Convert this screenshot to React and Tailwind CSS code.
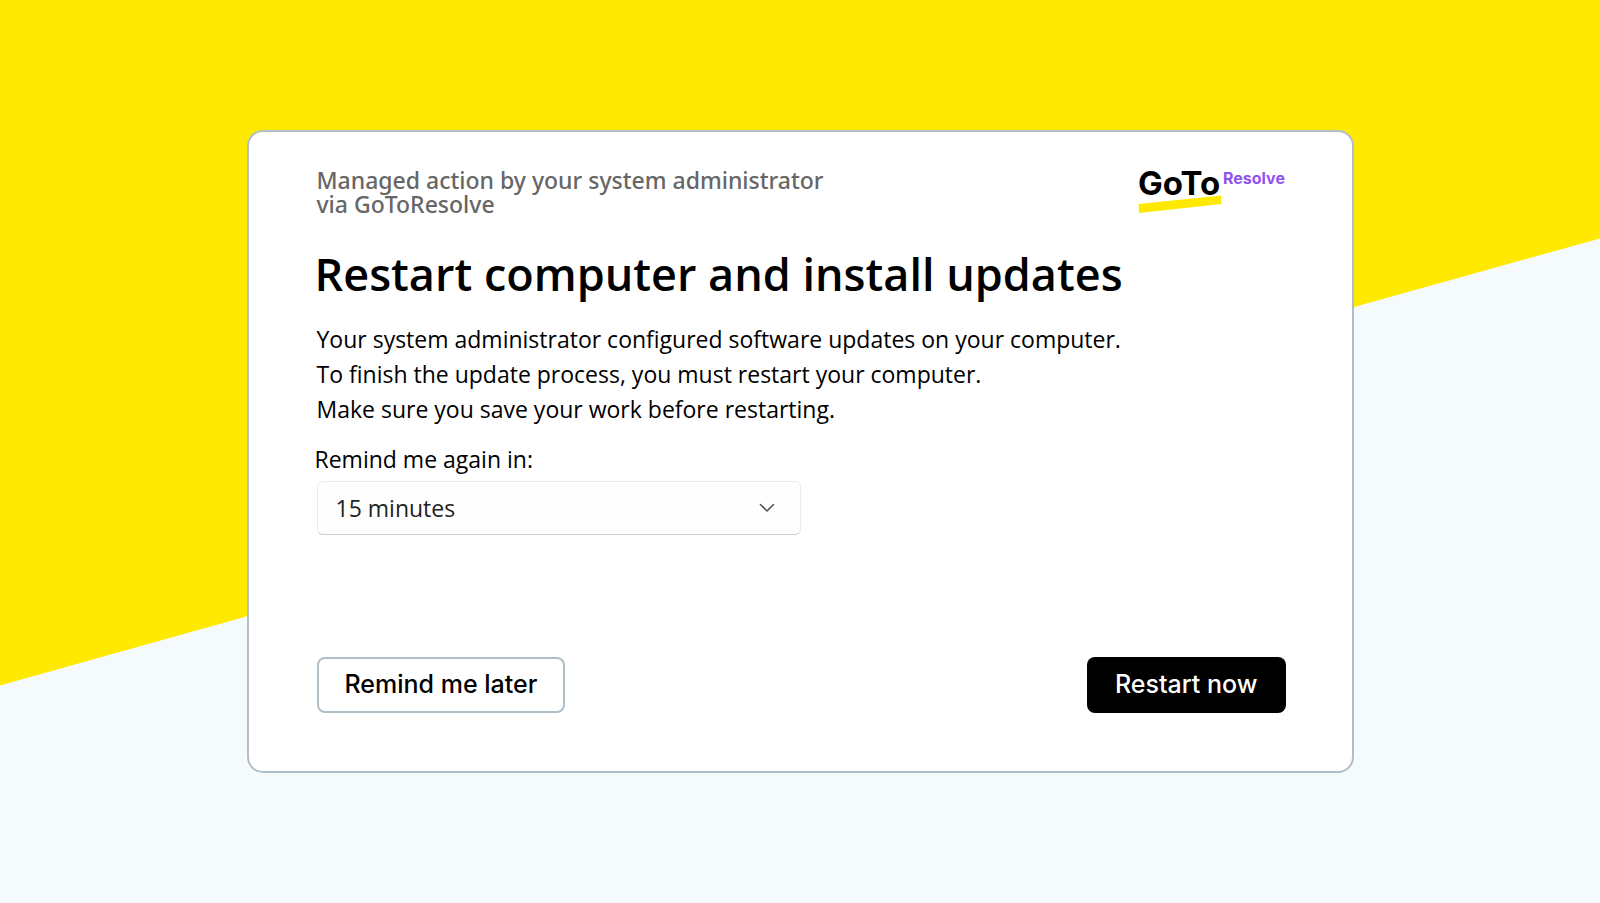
import React from "react";

function Logo() {
  return (
    <svg
      viewBox="0 0 148 48"
      role="img"
      aria-label="GoTo Resolve"
      className="h-12 w-[148px] shrink-0 overflow-visible"
    >
      <text x="0" y="27" fontSize="33" className="fill-black font-['Inter',sans-serif] font-bold">
        GoTo
      </text>
      <path d="M0.5 36 L83 27.5 L83.5 36 L1 45 Z" fill="#ffe900" />
      <text x="85" y="16" fontSize="16" className="fill-[#8f52ef] font-['Inter',sans-serif] font-bold">
        Resolve
      </text>
    </svg>
  );
}

function Chevron() {
  return (
    <svg viewBox="0 0 16 10" className="pointer-events-none col-start-1 row-start-1 mr-[26px] h-2.5 w-4 justify-self-end" fill="none" aria-hidden="true">
      <path d="M1.5 1.5 L8 8 L14.5 1.5" stroke="#555" strokeWidth="1.6" strokeLinecap="round" strokeLinejoin="round" />
    </svg>
  );
}

export default function App() {
  return (
    <div className="grid min-h-screen grid-cols-1 bg-[#f5fafc] font-['Open_Sans','Noto_Sans',sans-serif] text-black">
      <div className="col-start-1 row-start-1 bg-[#ffe900] [clip-path:polygon(0_0,100%_0,100%_26.4%,0_75.9%)]" />
      <main className="z-10 col-start-1 row-start-1 flex items-center justify-center p-8">
        <section className="flex w-full max-w-[1107px] flex-col rounded-2xl border-2 border-[#b0bec8] bg-white pt-9 pr-[66px] pb-[58px] pl-[68px]">
          <header className="flex items-start justify-between">
            <p className="font-['Noto_Sans','Open_Sans',sans-serif] text-[23px] leading-6 font-medium text-[#666]">
              Managed action by your system administrator
              <br />
              via GoToResolve
            </p>
            <Logo />
          </header>
          <h1 className="mt-[26px] -ml-0.5 text-[45px] leading-[64px] font-semibold">Restart computer and install updates</h1>
          <p className="mt-4 text-[23px] leading-[35px]">
            Your system administrator configured software updates on your computer.
            <br />
            To finish the update process, you must restart your computer.
            <br />
            Make sure you save your work before restarting.
          </p>
          <label htmlFor="remind" className="mt-3.5 -ml-0.5 text-[23px] leading-9">
            Remind me again in:
          </label>
          <div className="mt-1 grid w-full max-w-[484px] grid-cols-1 items-center">
            <select
              id="remind"
              defaultValue="15"
              className="col-start-1 row-start-1 h-[54px] w-full appearance-none rounded-md border border-[#ececec] border-b-[#cfcfcf] bg-[#fefefe] px-[18px] text-[23px] text-[#222]"
            >
              <option value="15">15 minutes</option>
              <option value="30">30 minutes</option>
              <option value="60">1 hour</option>
            </select>
            <Chevron />
          </div>
          <footer className="mt-[122px] flex items-center justify-between font-['Inter',sans-serif]">
            <button type="button" className="h-14 rounded-lg border-2 border-[#b0bec8] bg-white px-[26px] text-[25px] font-medium">
              Remind me later
            </button>
            <button type="button" className="h-14 rounded-lg bg-black px-7 text-[25px] font-medium text-white">
              Restart now
            </button>
          </footer>
        </section>
      </main>
    </div>
  );
}
